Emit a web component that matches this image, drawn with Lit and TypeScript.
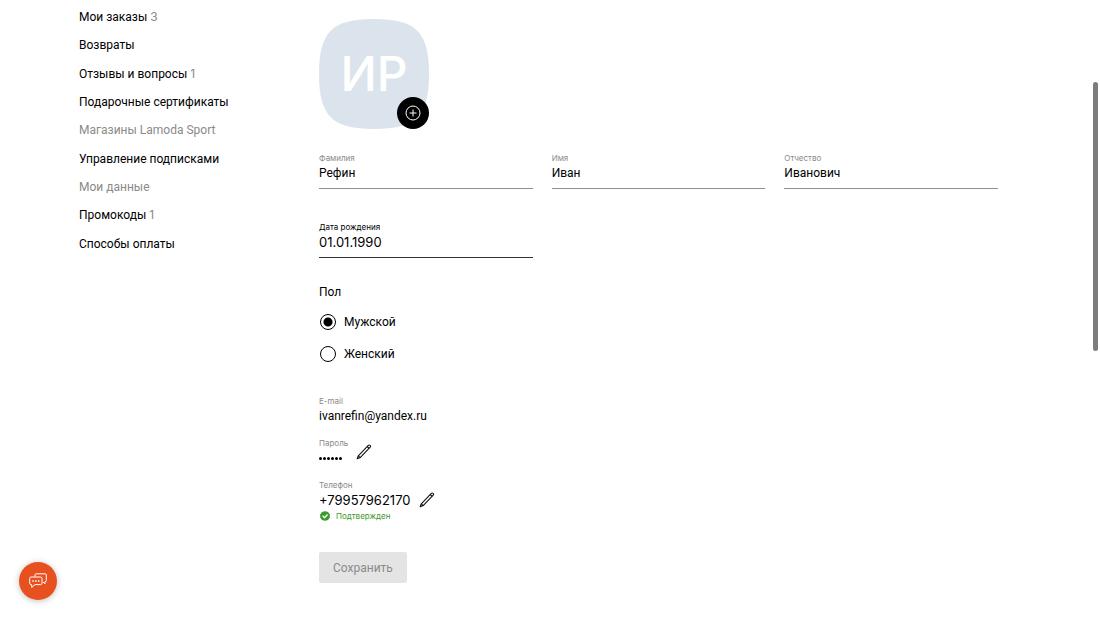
import { LitElement, html, css, svg } from "lit";
import { customElement } from "lit/decorators.js";
import { classMap } from "lit/directives/class-map.js";

interface NavItem {
  title: string;
  count?: number;
  muted?: boolean;
}

const NAV: NavItem[] = [
  { title: "Мои заказы", count: 3 },
  { title: "Возвраты" },
  { title: "Отзывы и вопросы", count: 1 },
  { title: "Подарочные сертификаты" },
  { title: "Магазины Lamoda Sport", muted: true },
  { title: "Управление подписками" },
  { title: "Мои данные", muted: true },
  { title: "Промокоды", count: 1 },
  { title: "Способы оплаты" },
];

const pencil = svg`<svg class="pencil" viewBox="0 0 16 16" width="16" height="16" fill="none" stroke="#111" stroke-width="1.1" stroke-linejoin="round" aria-hidden="true">
  <path d="M1.2 14.8 2.3 11.8 12.3 1.4Q13.2 .6 14.1 1.4 15 2.3 14.2 3.2L4.2 13.6Z"/>
  <path d="M11.2 2.5 13.1 4.4M2.3 11.8 4.2 13.6"/>
</svg>`;

@customElement("app-root")
export class AppRoot extends LitElement {
  static styles = css`
    :host {
      display: block;
      min-height: 100vh;
      background: #fff;
      color: #000;
      font: 400 12px/16px Roboto, "Liberation Sans", sans-serif;
    }
    * {
      box-sizing: border-box;
    }
    input,
    button {
      font: inherit;
      color: inherit;
      margin: 0;
      padding: 0;
      border: 0;
      background: none;
    }
    .page {
      display: grid;
      grid-template-columns: 240px 1fr;
      padding: 0 102px 0 79px;
    }
    .nav {
      margin: 3px 0 0;
      padding: 0;
      list-style: none;
      display: grid;
      grid-auto-rows: 1fr;
      align-items: center;
      height: 255px;
    }
    .link {
      color: inherit;
      text-decoration: none;
    }
    .link.muted,
    .count {
      color: #8a8a8a;
    }
    .count {
      font: 400 12px/16px Inter, sans-serif;
    }
    .form {
      padding-top: 19px;
    }
    .avatar {
      position: relative;
      width: 110px;
      height: 110px;
      display: grid;
      place-items: center;
    }
    .shape {
      grid-area: 1 / 1;
      width: 110px;
      height: 110px;
    }
    .initials {
      grid-area: 1 / 1;
      z-index: 1;
      color: #fff;
      font: 500 48px/56px Inter, sans-serif;
    }
    .add {
      position: absolute;
      z-index: 2;
      right: 0;
      bottom: 0;
      width: 32px;
      height: 32px;
      border-radius: 50%;
      background: #000;
      display: grid;
      place-items: center;
    }
    .fields {
      display: grid;
      grid-template-columns: repeat(3, 1fr);
      gap: 33px 19px;
      margin-top: 24px;
    }
    .field {
      display: flex;
      flex-direction: column;
      height: 36px;
      border-bottom: 1px solid #8f8f8f;
    }
    .field.active {
      grid-column: 1;
      border-color: #333;
    }
    .label {
      font: 400 8px/10px Inter, sans-serif;
      color: #8a8a8a;
    }
    .active .label {
      color: #000;
    }
    .input {
      width: 100%;
      height: 20px;
      outline: none;
    }
    .number {
      font: 400 13px/16px Inter, sans-serif;
    }
    .group {
      margin: 26px 0 0;
      padding: 0;
      border: 0;
    }
    .legend {
      padding: 0;
    }
    .option {
      display: flex;
      align-items: center;
      gap: 8px;
      height: 32px;
      padding-left: 1px;
    }
    .legend + .option {
      margin-top: 6px;
    }
    .radio {
      appearance: none;
      width: 16px;
      height: 16px;
      border: 1px solid #000;
      border-radius: 50%;
    }
    .radio:checked {
      background: radial-gradient(circle, #000 4px, transparent 5px);
    }
    .contacts {
      display: grid;
      gap: 14px;
      margin-top: 26px;
      justify-items: start;
    }
    .row {
      display: flex;
      align-items: center;
      gap: 8px;
    }
    .value,
    .dots {
      display: flex;
      align-items: center;
      height: 16px;
      margin-top: 2px;
    }
    .dots {
      gap: 1px;
    }
    .dot {
      width: 3px;
      height: 3px;
      border-radius: 2px;
      background: #000;
    }
    .edit {
      display: block;
      height: 16px;
    }
    .pencil {
      display: block;
    }
    .phone {
      align-items: end;
    }
    .verified {
      display: flex;
      align-items: center;
      gap: 6px;
      padding: 3px 0 0 1px;
      color: #3c9a2b;
      font: 400 8px/10px Inter, sans-serif;
    }
    .save {
      display: block;
      margin-top: 31px;
      padding: 8px 14px;
      height: 31px;
      border-radius: 2px;
      background: #e4e4e4;
      color: #8a8a8a;
      line-height: 16px;
    }
    .chat {
      position: fixed;
      left: 19px;
      bottom: 19px;
      width: 38px;
      height: 38px;
      border-radius: 50%;
      background: #e8501f;
      box-shadow: 0 1px 6px rgba(0, 0, 0, 0.25);
      display: grid;
      place-items: center;
    }
    .scroll {
      position: fixed;
      top: 82px;
      right: 2px;
      width: 5px;
      height: 269px;
      border-radius: 3px;
      background: #7d7d7d;
    }
  `;

  private field(id: string, label: string, value: string, active = false) {
    return html`<div class=${classMap({ field: true, active })}>
      <label class="label" for=${id}>${label}</label>
      <input class=${classMap({ input: true, number: active })} id=${id} .value=${value} />
    </div>`;
  }

  private option(label: string, checked = false) {
    return html`<label class="option">
      <input class="radio" type="radio" name="gender" .checked=${checked} />${label}
    </label>`;
  }

  render() {
    return html`
      <div class="page">
        <nav>
          <ul class="nav">
            ${NAV.map(
              (item) => html`<li>
                <a class=${classMap({ link: true, muted: !!item.muted })} href="#"
                  >${item.title}${item.count ? html` <span class="count">${item.count}</span>` : ""}</a
                >
              </li>`
            )}
          </ul>
        </nav>
        <form class="form">
          <div class="avatar">
            <svg class="shape" viewBox="0 0 110 110" aria-hidden="true">
              <path
                fill="#dbe4ec"
                d="M55 0C97 0 110 13 110 55S97 110 55 110 0 97 0 55 13 0 55 0Z"
              />
            </svg>
            <span class="initials">ИР</span>
            <button class="add" type="button" aria-label="Добавить фото">
              <svg width="16" height="16" viewBox="0 0 16 16" fill="none" stroke="#fff" aria-hidden="true">
                <circle cx="8" cy="8" r="7" />
                <path d="M8 4.5v7M4.5 8h7" />
              </svg>
            </button>
          </div>
          <div class="fields">
            ${this.field("surname", "Фамилия", "Рефин")} ${this.field("name", "Имя", "Иван")}
            ${this.field("patronymic", "Отчество", "Иванович")}
            ${this.field("birthday", "Дата рождения", "01.01.1990", true)}
          </div>
          <fieldset class="group">
            <legend class="legend">Пол</legend>
            ${this.option("Мужской", true)} ${this.option("Женский")}
          </fieldset>
          <div class="contacts">
            <div>
              <div class="label">E-mail</div>
              <span class="value">ivanrefin@yandex.ru</span>
            </div>
            <div class="row">
              <div>
                <div class="label">Пароль</div>
                <div class="dots">${[0, 1, 2, 3, 4, 5].map(() => html`<i class="dot"></i>`)}</div>
              </div>
              <button class="edit" type="button" aria-label="Изменить пароль">${pencil}</button>
            </div>
            <div>
              <div class="row phone">
                <div>
                  <div class="label">Телефон</div>
                  <span class="value number">+79957962170</span>
                </div>
                <button class="edit" type="button" aria-label="Изменить телефон">${pencil}</button>
              </div>
              <div class="verified">
                <svg width="10" height="10" viewBox="0 0 10 10" aria-hidden="true">
                  <path
                    fill="#3c9a2b"
                    d="M5 0 6.4.7 8 .8 8.8 2.2 10 3.4 9.7 5 10 6.6 8.8 7.8 8 9.2 6.4 9.3 5 10 3.6 9.3 2 9.2 1.2 7.8 0 6.6.3 5 0 3.4 1.2 2.2 2 .8 3.6.7Z"
                  />
                  <path d="M2.6 4.8 4.5 6.7 7.6 3.5" fill="none" stroke="#fff" stroke-width="1.4" />
                </svg>
                Подтвержден
              </div>
            </div>
          </div>
          <button class="save" type="button" disabled>Сохранить</button>
        </form>
      </div>
      <button class="chat" type="button" aria-label="Чат">
        <svg width="18" height="16" viewBox="0 0 18 16" fill="none" stroke="#fff" stroke-linejoin="round" aria-hidden="true">
          <path d="M6 3.5V2Q6 .8 7.2 .8H16Q17.3.8 17.3 2V7.5Q17.3 8.7 16 8.7V10.8L14 9" />
          <path d="M2 4H11.6Q13 4 13 5.3V10.2Q13 11.6 11.6 11.6H6L2.7 14.4V11.6H2Q.7 11.6 .7 10.2V5.3Q.7 4 2 4Z" />
          <path d="M3.3 7.9h1.5M6.1 7.9h1.5M8.9 7.9h1.5" stroke-width="1.5" />
        </svg>
      </button>
      <div class="scroll"></div>
    `;
  }
}
